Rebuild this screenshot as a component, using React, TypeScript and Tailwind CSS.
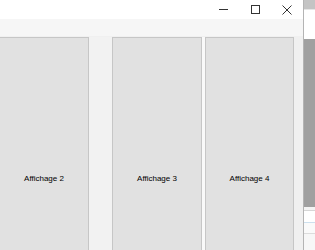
const Panel = ({ label, className }: { label: string; className: string }) => {
  return (
    <div className={`h-[284px] shrink-0 bg-[#e1e1e1] border border-[#c6c6c6] flex items-center justify-center ${className}`}>
      <span className="text-[8px] text-black" style={{ fontFamily: '"Liberation Sans", Arial, sans-serif' }}>
        {label}
      </span>
    </div>
  );
};

const App = () => {
  return (
    <div className="w-[315px] h-[250px] flex overflow-hidden bg-white">
      <div className="w-[304px] shrink-0 flex flex-col border-r border-[#b4b4b4]">
        <div className="h-[19px] bg-white flex justify-end shrink-0">
          <div className="w-[32px] flex items-center justify-center">
            <div className="w-[9px] h-px bg-[#333]" />
          </div>
          <div className="w-[32px] flex items-center justify-center">
            <div className="w-[9px] h-[9px] border border-[#333]" />
          </div>
          <div className="w-[32px] flex items-center justify-center">
            <svg width="10" height="10" viewBox="0 0 10 10">
              <path d="M0.5 0.5 L9.5 9.5 M9.5 0.5 L0.5 9.5" stroke="#333" strokeWidth="1" />
            </svg>
          </div>
        </div>
        <div className="h-[17px] bg-[#f6f6f6] shrink-0" />
        <div className="flex-1 bg-[#f0f0f0] flex items-start overflow-hidden pt-px">
          <Panel label="Affichage 2" className="w-[90px] -ml-px" />
          <div className="w-[23px] shrink-0 h-full bg-[#f2f2f2]" />
          <Panel label="Affichage 3" className="w-[90px]" />
          <div className="w-[3px] shrink-0 h-full bg-[#f9f9f9]" />
          <Panel label="Affichage 4" className="w-[89px]" />
          <div className="flex-1 h-full bg-[#f0f0f0]" />
        </div>
      </div>
      <div className="flex-1 flex flex-col">
        <div className="h-[9px] bg-[#c4c4c4]" />
        <div className="h-px bg-[#e6e6e6]" />
        <div className="h-[29px] bg-white" />
        <div className="h-[168px] bg-[#a0a0a0]" />
        <div className="h-[3px] bg-[#f4f4f4]" />
        <div className="h-px bg-[#d6d6d6]" />
        <div className="h-[11px] bg-white" />
        <div className="h-px bg-[#cde0ee]" />
        <div className="h-[10px] bg-[#fafafa]" />
        <div className="h-px bg-[#dcdcdc]" />
        <div className="flex-1 bg-[#f7f7f7]" />
      </div>
    </div>
  );
};

export default App;
